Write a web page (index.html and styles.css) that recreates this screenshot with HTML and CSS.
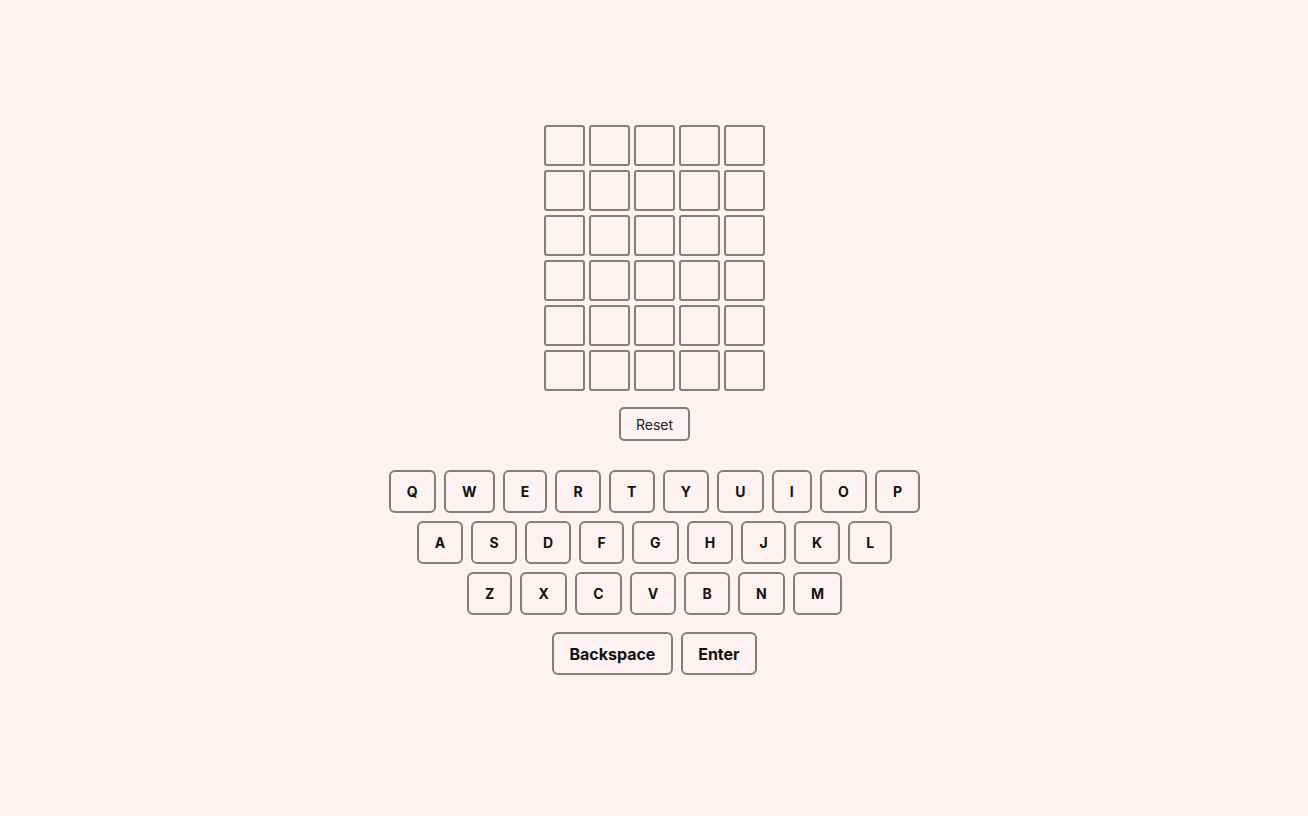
FILE: index.html
```html
<!DOCTYPE html>
<html lang="en">
<head>
<meta charset="utf-8">
<title>Wordle</title>
<link rel="stylesheet" href="styles.css">
</head>
<body>
<main class="app">
  <div class="board">
    <div class="cell"></div><div class="cell"></div><div class="cell"></div><div class="cell"></div><div class="cell"></div>
    <div class="cell"></div><div class="cell"></div><div class="cell"></div><div class="cell"></div><div class="cell"></div>
    <div class="cell"></div><div class="cell"></div><div class="cell"></div><div class="cell"></div><div class="cell"></div>
    <div class="cell"></div><div class="cell"></div><div class="cell"></div><div class="cell"></div><div class="cell"></div>
    <div class="cell"></div><div class="cell"></div><div class="cell"></div><div class="cell"></div><div class="cell"></div>
    <div class="cell"></div><div class="cell"></div><div class="cell"></div><div class="cell"></div><div class="cell"></div>
  </div>
  <button class="reset">Reset</button>
  <div class="keyboard">
    <div class="row">
      <button class="key">Q</button><button class="key">W</button><button class="key">E</button><button class="key">R</button><button class="key">T</button><button class="key">Y</button><button class="key">U</button><button class="key">I</button><button class="key">O</button><button class="key">P</button>
    </div>
    <div class="row">
      <button class="key">A</button><button class="key">S</button><button class="key">D</button><button class="key">F</button><button class="key">G</button><button class="key">H</button><button class="key">J</button><button class="key">K</button><button class="key">L</button>
    </div>
    <div class="row">
      <button class="key">Z</button><button class="key">X</button><button class="key">C</button><button class="key">V</button><button class="key">B</button><button class="key">N</button><button class="key">M</button>
    </div>
    <div class="row row-actions">
      <button class="key key-wide">Backspace</button><button class="key key-wide">Enter</button>
    </div>
  </div>
</main>
</body>
</html>
```
FILE: styles.css
```css
html, body {
  margin: 0;
  padding: 0;
  background: #fdf1f1;
  font-family: Inter, "Liberation Sans", sans-serif;
  color: #111;
}

.app {
  display: flex;
  flex-direction: column;
  align-items: center;
  padding-top: 125px;
  padding-left: 1px;
}

.board {
  display: grid;
  grid-template-columns: repeat(5, 41px);
  grid-auto-rows: 41px;
  gap: 4px;
}

.cell {
  box-sizing: border-box;
  border: 2px solid #877b7b;
  border-radius: 3px;
  background: #fdf1f1;
}

.reset {
  margin-top: 16px;
  box-sizing: border-box;
  height: 34px;
  width: 71px;
  padding: 0;
  font-family: inherit;
  font-size: 14px;
  color: #222;
  background: #fdf1f1;
  border: 2px solid #877b7b;
  border-radius: 5px;
}

.keyboard {
  margin-top: 29px;
  display: flex;
  flex-direction: column;
  align-items: center;
  gap: 8px;
}

.row {
  display: flex;
  gap: 8px;
}

.row-actions {
  margin-top: 9px;
}

.key {
  box-sizing: border-box;
  height: 43px;
  padding: 0 16.15px;
  font-family: inherit;
  font-size: 14px;
  font-weight: 700;
  color: #111;
  background: #fdf1f1;
  border: 2px solid #877b7b;
  border-radius: 6px;
}

.key-wide {
  padding: 0 15.4px;
  font-size: 16px;
}
```
